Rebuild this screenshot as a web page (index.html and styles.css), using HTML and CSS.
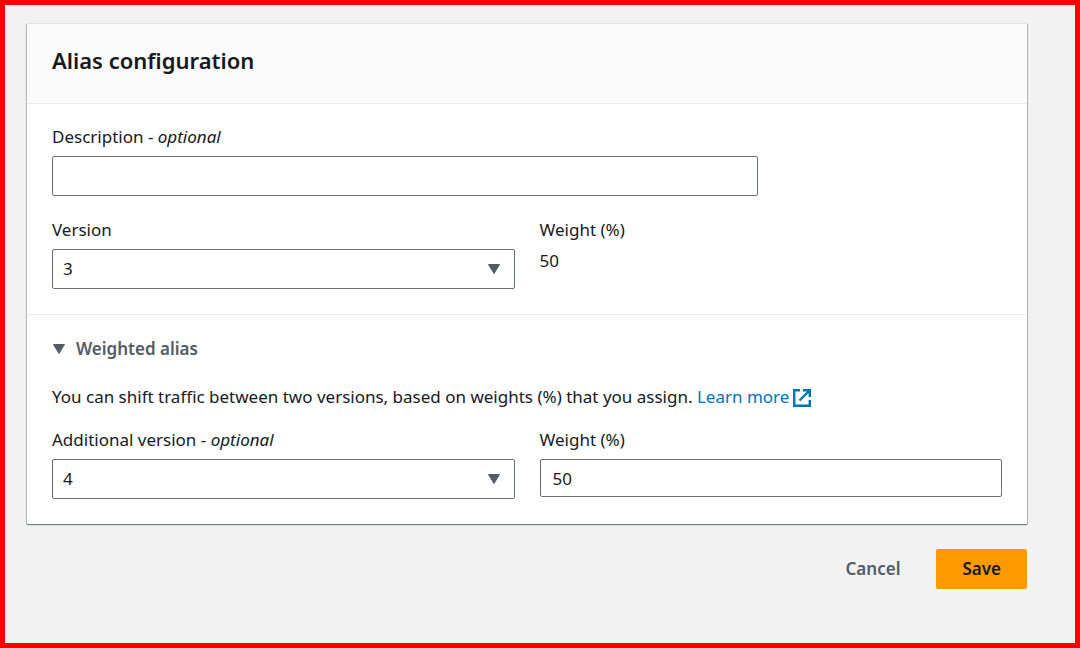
FILE: index.html
```html
<!doctype html>
<html lang="en">
	<head>
		<meta charset="UTF-8">
		<meta name="viewport" content="width=device-width, initial-scale=1">
		<title>Alias configuration</title>
		<link rel="stylesheet" href="styles.css">
	</head>
	<body>
		<form class="page">
			<div class="card">
				<div class="card-header">
					<h2 class="card-title">Alias configuration</h2>
				</div>
				<div class="section">
					<div class="row row-quarters">
						<div class="field field-wide">
							<label class="label" for="description">Description - <i>optional</i></label>
							<input class="control" type="text" id="description">
						</div>
					</div>
					<div class="row">
						<div class="field">
							<label class="label" for="version">Version</label>
							<div class="select">
								<select class="control" id="version">
									<option>3</option>
								</select>
								<svg class="select-arrow" width="14" height="12" viewBox="0 0 14 12" aria-hidden="true"><path d="M1.5 1.5h11L7 10.5z"/></svg>
							</div>
						</div>
						<div class="field">
							<span class="label">Weight (%)</span>
							<span>50</span>
						</div>
					</div>
				</div>
				<details class="section expander" open>
					<summary class="summary">
						<svg class="summary-arrow" width="14" height="12" viewBox="0 0 14 12" aria-hidden="true"><path d="M1.5 1.5h11L7 10.5z"/></svg>
						Weighted alias
					</summary>
					<p class="text">
						You can shift traffic between two versions, based on weights (%) that you assign.
						<a class="link" href="#">Learn more<svg class="external" width="18" height="18" viewBox="0 0 18 18" aria-hidden="true"><path d="M7 1.200H1.200v15.600h15.600V11M10 1.200h6.800V8M16.500 1.500L6.500 11.500"/></svg></a>
					</p>
					<div class="row">
						<div class="field">
							<label class="label" for="additional">Additional version - <i>optional</i></label>
							<div class="select">
								<select class="control" id="additional">
									<option>4</option>
								</select>
								<svg class="select-arrow" width="14" height="12" viewBox="0 0 14 12" aria-hidden="true"><path d="M1.5 1.5h11L7 10.5z"/></svg>
							</div>
						</div>
						<div class="field">
							<label class="label" for="weight">Weight (%)</label>
							<input class="control control-short" type="text" id="weight" value="50">
						</div>
					</div>
				</details>
			</div>
			<div class="actions">
				<button class="btn" type="button">Cancel</button>
				<button class="btn btn-primary" type="submit">Save</button>
			</div>
		</form>
	</body>
</html>
```
FILE: styles.css
```css
*{box-sizing:border-box}
body{
	margin:0;
	min-height:100vh;
	border:5px solid #f00;
	background-color:#f2f2f2;
	color:#16191f;
	font-family:"Noto Sans","Open Sans",sans-serif;
	font-size:17px;
	line-height:24px
}
.page{padding:19px 48px 24px 22px}

/* card */
.card{
	background-color:#fff;
	box-shadow:0 1px 1px 0 rgba(0,28,36,.5),1px 0 1px 0 rgba(0,28,36,.2),-1px 0 1px 0 rgba(0,28,36,.2)
}
.card-header{
	padding:20px 25px 27px;
	background-color:#fafafa;
	border-bottom:1px solid #eaeded
}
.card-title{margin:0;font-size:22px;line-height:32px;font-weight:600}
.section{padding:21px 25px 25px}
.expander{padding-top:22px;border-top:1px solid #eaeded}

/* fields */
.row{display:grid;grid-template-columns:1fr 1fr;gap:25px}
.row + .row{margin-top:22px}
.row-quarters{grid-template-columns:repeat(4,1fr)}
.field{display:flex;flex-direction:column;gap:7px;min-width:0}
.field-wide{grid-column:span 3}
.control{
	display:block;
	width:100%;
	height:40px;
	margin:0;
	padding:0 12px;
	border:1px solid #687078;
	border-radius:2px;
	background-color:#fff;
	color:#16191f;
	font:inherit
}
.control-short{height:38px}
.select{position:relative}
.select .control{appearance:none;padding:0 40px 0 10px}
.select-arrow{
	position:absolute;
	right:14px;
	top:14px;
	pointer-events:none
}
.select-arrow,
.summary-arrow{fill:#545b64;stroke:#545b64;stroke-linejoin:round}

/* weighted alias */
.summary{
	display:flex;
	align-items:center;
	gap:10px;
	color:#545b64;
	font-weight:600;
	list-style:none;
	cursor:pointer
}
.text{margin:24px 0 19px}
.link{color:#0073bb;text-decoration:none}
.external{
	margin-left:4px;
	vertical-align:-4px;
	fill:none;
	stroke:#0073bb;
	stroke-width:2.400
}

/* buttons */
.actions{display:flex;justify-content:flex-end;gap:10px;margin-top:25px}
.btn{
	height:40px;
	padding:0 26px;
	border:0;
	border-radius:2px;
	background:none;
	color:#545b64;
	font:inherit;
	font-weight:600;
	cursor:pointer
}
.btn-primary{background-color:#f90;color:#16191f}
```
